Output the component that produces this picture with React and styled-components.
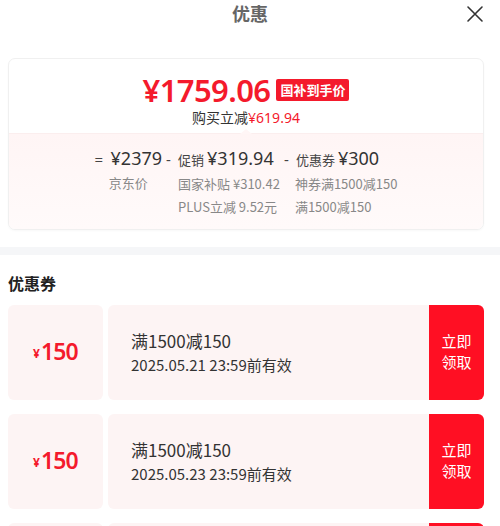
import React from 'react';
import styled, { createGlobalStyle } from 'styled-components';

const GlobalStyle = createGlobalStyle`
  body {
    margin: 0;
    background: #fff;
    font-family: "Noto Sans", "Noto Sans CJK SC", sans-serif;
    color: #333;
  }
`;

const RED = '#f41a2c';

const Page = styled.div`
  width: 500px;
  height: 526px;
  overflow: hidden;
  background: #fff;
`;

const Header = styled.div`
  position: relative;
  height: 28px;
  display: flex;
  align-items: center;
  justify-content: center;
  margin-bottom: 30px;
`;

const Title = styled.div`
  font-size: 18px;
  font-weight: 700;
  color: #666;
  line-height: 26px;
`;

const Close = styled.button`
  position: absolute;
  right: 16px;
  top: 5px;
  width: 18px;
  height: 18px;
  padding: 0;
  border: 0;
  background: none;
  display: flex;
`;

const Inner = styled.div`
  padding: 0 16px 0 8px;
`;

const PriceCard = styled.div`
  border: 1px solid #f0f0f0;
  border-radius: 7px;
  overflow: hidden;
  box-shadow: 0 1px 2px rgba(0, 0, 0, 0.03);
`;

const PriceTop = styled.div`
  display: flex;
  flex-direction: column;
  align-items: center;
  padding-top: 15px;
  height: 59px;
  position: relative;
`;

const PriceRow = styled.div`
  display: flex;
  align-items: center;
  gap: 6px;
  height: 32px;
`;

const BigPrice = styled.span`
  color: ${RED};
  font-size: 31px;
  font-weight: 600;
  letter-spacing: -0.6px;
  line-height: 32px;
`;

const Badge = styled.span`
  background: ${RED};
  color: #fff;
  font-family: "Noto Sans CJK SC", sans-serif;
  font-weight: 700;
  font-size: 13px;
  line-height: 22px;
  padding: 0 4px;
  border-radius: 2px;
`;

const Saving = styled.div`
  font-size: 14px;
  line-height: 20px;
  margin-top: 1px;
  font-family: "Noto Sans CJK SC", sans-serif;
  color: #333;

  em {
    font-style: normal;
    font-family: "Noto Sans", sans-serif;
    color: ${RED};
  }
`;

const Pointer = styled.span`
  position: absolute;
  bottom: -1px;
  left: 50%;
  margin-left: -6px;
  width: 0;
  height: 0;
  border-left: 6px solid transparent;
  border-right: 6px solid transparent;
  border-bottom: 5px solid #fff6f6;
`;

const Breakdown = styled.div`
  background: linear-gradient(#fff5f5, #fffafa);
  border-top: 1px solid #fbeeee;
  display: flex;
  justify-content: center;
  gap: 4px;
  padding: 12px 0 11px;
`;

const Col = styled.div`
  display: flex;
  flex-direction: column;
  align-items: ${p => (p.$center ? 'center' : 'flex-start')};
`;

const Head = styled.div`
  display: flex;
  align-items: baseline;
  color: #333;
  font-size: 18px;
  line-height: 24px;
  white-space: nowrap;

  small {
    font-family: "Noto Sans CJK SC", sans-serif;
    font-size: 13px;
    margin-right: 3px;
    color: #444;
  }
`;

const Op = styled.span`
  font-size: 15px;
  width: ${p => p.$w || 12}px;
  color: #444;
`;

const Sub = styled.div`
  font-size: 13px;
  line-height: 23px;
  color: #888;
  white-space: nowrap;
  padding-left: ${p => p.$indent || 0}px;
  font-family: "Noto Sans CJK SC", sans-serif;
`;

const Band = styled.div`
  height: 8px;
  background: #f5f6f8;
  margin-top: 17px;
`;

const SectionTitle = styled.div`
  font-size: 16px;
  font-weight: 700;
  color: #222;
  line-height: 22px;
  margin: 17px 0 11px;
  font-family: "Noto Sans CJK SC", sans-serif;
`;

const List = styled.div`
  display: flex;
  flex-direction: column;
  gap: 14px;
`;

const Coupon = styled.div`
  display: flex;
  height: 95px;
`;

const Stub = styled.div`
  width: 95px;
  background: #fdf4f4;
  border-radius: 6px;
  display: flex;
  align-items: center;
  justify-content: center;
  padding-bottom: 4px;
  box-sizing: border-box;
  color: ${RED};

  small {
    font-size: 12px;
    font-weight: 700;
    margin-right: 1px;
    margin-top: 5px;
  }
  b {
    font-size: 23px;
    font-weight: 600;
    letter-spacing: -0.8px;
  }
`;

const Body = styled.div`
  flex: 1;
  margin-left: 5px;
  background: #fdf4f4;
  border-radius: 6px 0 0 6px;
  display: flex;
  flex-direction: column;
  justify-content: center;
  padding-left: 23px;
  padding-bottom: 0;
  font-family: "Noto Sans CJK SC", sans-serif;
`;

const Rule = styled.div`
  font-size: 17px;
  line-height: 24px;
  color: #333;
`;

const Expire = styled.div`
  font-size: 15px;
  line-height: 24px;
  color: #333;
`;

const Grab = styled.button`
  width: 55px;
  border: 0;
  background: #ff0f23;
  color: #fff;
  font-family: "Noto Sans CJK SC", sans-serif;
  font-size: 15px;
  line-height: 21px;
  border-radius: 0 6px 6px 0;
  padding: 0 0 3px;
`;

const coupons = [
  { amount: 150, rule: '满1500减150', expire: '2025.05.21 23:59前有效' },
  { amount: 150, rule: '满1500减150', expire: '2025.05.23 23:59前有效' },
  { amount: 150, rule: '满1500减150', expire: '2025.05.25 23:59前有效' },
];

export default function App() {
  return (
    <Page>
      <GlobalStyle />
      <Header>
        <Title>优惠</Title>
        <Close aria-label="关闭">
          <svg width="18" height="18" viewBox="0 0 18 18">
            <path d="M2 2L16 16M16 2L2 16" stroke="#333" strokeWidth="1.6" strokeLinecap="round" />
          </svg>
        </Close>
      </Header>
      <Inner>
        <PriceCard>
          <PriceTop>
            <PriceRow>
              <BigPrice>¥1759.06</BigPrice>
              <Badge>国补到手价</Badge>
            </PriceRow>
            <Saving>
              购买立减<em>¥619.94</em>
            </Saving>
            <Pointer />
          </PriceTop>
          <Breakdown>
            <Col $center>
              <Head>
                <Op $w={16}>=</Op>¥2379
              </Head>
              <Sub>京东价</Sub>
            </Col>
            <Col>
              <Head>
                <Op>-</Op>
                <small>促销</small>¥319.94
              </Head>
              <Sub $indent={12}>国家补贴 ¥310.42</Sub>
              <Sub $indent={12}>PLUS立减 9.52元</Sub>
            </Col>
            <Col>
              <Head>
                <Op>-</Op>
                <small>优惠券</small>¥300
              </Head>
              <Sub $indent={11}>神券满1500减150</Sub>
              <Sub $indent={11}>满1500减150</Sub>
            </Col>
          </Breakdown>
        </PriceCard>
      </Inner>
      <Band />
      <Inner>
        <SectionTitle>优惠券</SectionTitle>
        <List>
          {coupons.map((c, i) => (
            <Coupon key={i}>
              <Stub>
                <small>¥</small>
                <b>{c.amount}</b>
              </Stub>
              <Body>
                <Rule>{c.rule}</Rule>
                <Expire>{c.expire}</Expire>
              </Body>
              <Grab>
                立即
                <br />
                领取
              </Grab>
            </Coupon>
          ))}
        </List>
      </Inner>
    </Page>
  );
}
